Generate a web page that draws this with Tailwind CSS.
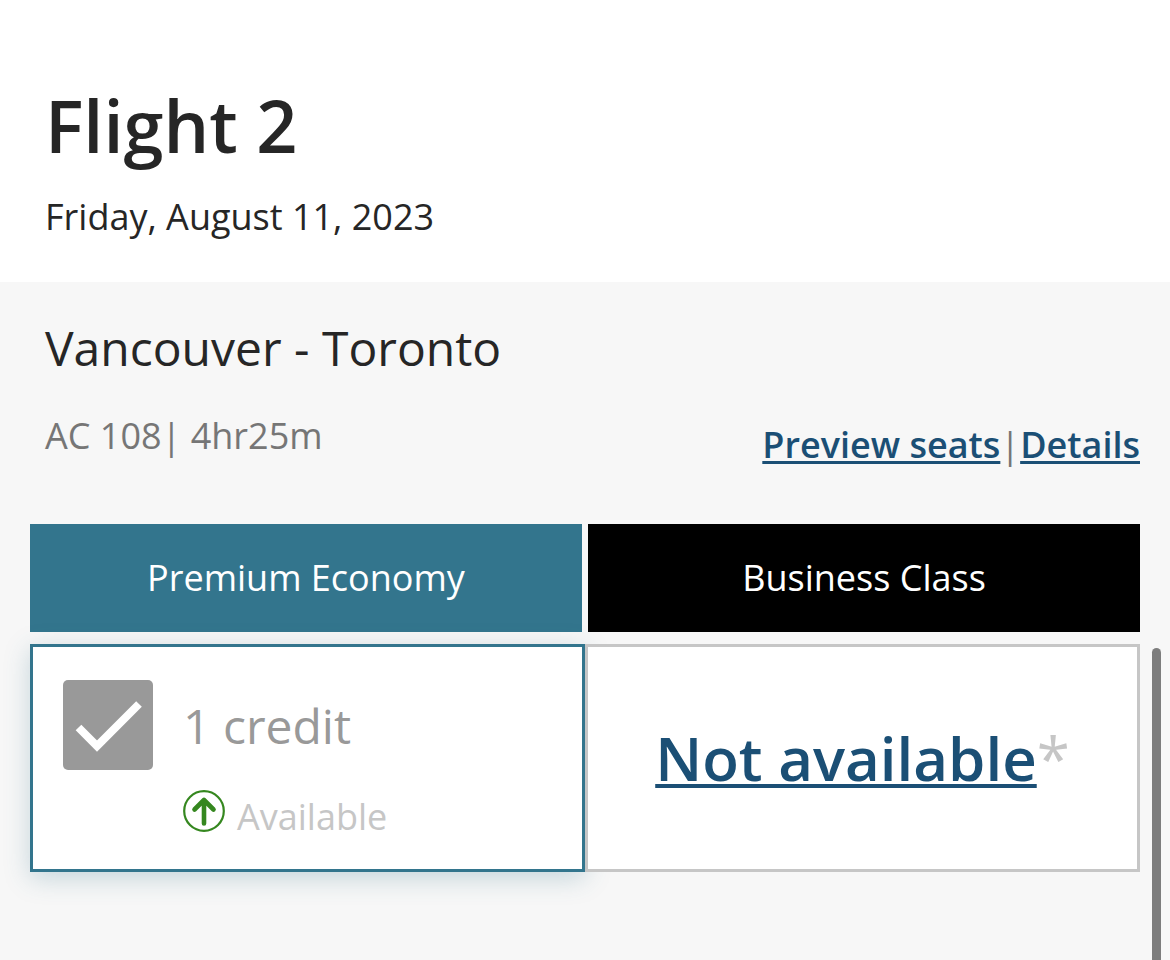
<!DOCTYPE html>
<html lang="en">
<head>
    <meta charset="UTF-8">
    <meta name="viewport" content="width=device-width, initial-scale=1.0">
    <title>Flight 2 - Upgrade options</title>
    <script src="https://cdn.jsdelivr.net/npm/@tailwindcss/browser@4"></script>
</head>
<body class="flex h-screen flex-col overflow-hidden bg-[#f7f7f7] font-['Open_Sans',sans-serif] text-[#262626]">
    <header class="bg-white px-[45px] pt-[77px] pb-10">
        <h1 class="text-[72px] leading-[96px] font-semibold">Flight 2</h1>
        <p class="mt-[19px] text-[36px] leading-[50px]">Friday, August 11, 2023</p>
    </header>
    <main class="relative grow px-[30px] pt-8">
        <h2 class="px-[15px] text-[48px] leading-[68px]">Vancouver - Toronto</h2>
        <div class="flex justify-between pl-[15px] text-[36px] leading-[50px] text-[#767676]">
            <p class="mt-[29px]">AC 108| 4hr25m</p>
            <p class="mt-[38px] flex">
                <a href="#" class="font-semibold text-[#1b4f75] underline decoration-3 underline-offset-[3px]">Preview seats</a>
                <span>|</span>
                <a href="#" class="font-semibold text-[#1b4f75] underline decoration-3 underline-offset-[3px]">Details</a>
            </p>
        </div>
        <div class="mt-[54px] grid grid-cols-2 gap-x-[6px] text-center text-[36px] leading-[108px] text-white">
            <h3 class="bg-[#33758d]">Premium Economy</h3>
            <h3 class="bg-black">Business Class</h3>
        </div>
        <div class="mt-3 grid grid-cols-2">
            <div class="flex gap-[30px] border-3 border-[#33758d] bg-white px-[30px] pt-[33px] pb-[25px] shadow-[0_6px_24px_rgba(51,117,141,0.25)]">
                <input type="checkbox" id="credit" class="peer sr-only" checked disabled>
                <label for="credit" class="flex size-[90px] rounded-[5px] bg-[#999]" aria-label="Use 1 credit">
                    <svg class="size-full" viewBox="0 0 90 90" fill="none" stroke="#fff" stroke-width="8"><path d="M15.5 47.5 34 66 76 24"/></svg>
                </label>
                <div>
                    <p class="mt-3 text-[48px] leading-[68px] text-[#999]">1 credit</p>
                    <p class="mt-[30px] flex items-start gap-3 text-[36px] leading-[54px] text-[#c6c6c6]">
                        <svg class="size-[42px]" viewBox="0 0 42 42" fill="none" stroke="#35871f" stroke-linecap="round" stroke-linejoin="round"><circle cx="21" cy="21" r="19.8" stroke-width="2.2"/><path stroke-width="4.6" d="M21 33.5V10M11.5 19.5 21 10 30.5 19.5"/></svg>
                        Available
                    </p>
                </div>
            </div>
            <div class="flex items-center justify-center border-3 border-[#c6c6c6] bg-white text-[60px] leading-[82px]">
                <a href="#" class="font-semibold text-[#1b4f75] underline decoration-4 underline-offset-[3px]">Not available</a><span class="text-[#c6c6c6]">*</span>
            </div>
        </div>
        <div class="absolute top-[366px] right-[9px] bottom-0 w-[9px] rounded-t-full bg-[#7d7d7d]"></div>
    </main>
</body>
</html>
